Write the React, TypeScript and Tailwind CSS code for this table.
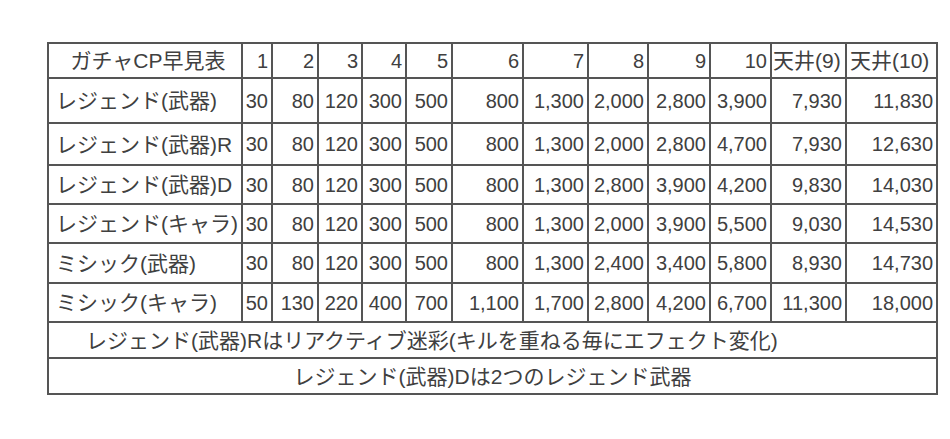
const colWidths = [194, 30, 46, 44, 44, 46, 71, 65, 60, 62, 61, 75, 91];

type Row = {
  name: string;
  values: string[];
  h: string;
};

const rows: Row[] = [
  { name: "レジェンド(武器)", h: "h-[45px]", values: ["30", "80", "120", "300", "500", "800", "1,300", "2,000", "2,800", "3,900", "7,930", "11,830"] },
  { name: "レジェンド(武器)R", h: "h-[42px]", values: ["30", "80", "120", "300", "500", "800", "1,300", "2,000", "2,800", "4,700", "7,930", "12,630"] },
  { name: "レジェンド(武器)D", h: "h-[39px]", values: ["30", "80", "120", "300", "500", "800", "1,300", "2,800", "3,900", "4,200", "9,830", "14,030"] },
  { name: "レジェンド(キャラ)", h: "h-[39px]", values: ["30", "80", "120", "300", "500", "800", "1,300", "2,000", "3,900", "5,500", "9,030", "14,530"] },
  { name: "ミシック(武器)", h: "h-[40px]", values: ["30", "80", "120", "300", "500", "800", "1,300", "2,400", "3,400", "5,800", "8,930", "14,730"] },
  { name: "ミシック(キャラ)", h: "h-[39px]", values: ["50", "130", "220", "400", "700", "1,100", "1,700", "2,800", "4,200", "6,700", "11,300", "18,000"] },
];

const headers = ["1", "2", "3", "4", "5", "6", "7", "8", "9", "10"];

export default function App() {
  const cell = "border-2 border-[#555555] p-0";
  const num = `${cell} text-right pr-[3px] whitespace-nowrap text-[20px]`;

  return (
    <div className="w-[950px] h-[439px] bg-white pl-[47px] pt-[42px]">
      <table
        className="table-fixed border-collapse text-[21px] leading-none text-[#404040] w-[891px]"
        style={{ fontFamily: '"Liberation Sans", "Noto Sans CJK JP", sans-serif' }}
      >
        <colgroup>
          {colWidths.map((w, i) => (
            <col key={i} style={{ width: w }} />
          ))}
        </colgroup>
        <tbody>
          <tr className="h-[35px]">
            <td className={`${cell} text-center pl-[6px] whitespace-nowrap`}>ガチャCP早見表</td>
            {headers.map((h) => (
              <td key={h} className={num}>
                {h}
              </td>
            ))}
            <td className={`${cell} text-left pl-[1px] whitespace-nowrap`}>天井(9)</td>
            <td className={`${cell} text-left pl-[3px] whitespace-nowrap`}>天井(10)</td>
          </tr>
          {rows.map((r) => (
            <tr key={r.name} className={r.h}>
              <td className={`${cell} text-left pl-[7px] whitespace-nowrap`}>{r.name}</td>
              {r.values.map((v, i) => (
                <td key={i} className={num}>
                  {v}
                </td>
              ))}
            </tr>
          ))}
          <tr className="h-[36px]">
            <td colSpan={13} className={`${cell} text-left pl-[37px] whitespace-nowrap`}>
              レジェンド(武器)Rはリアクティブ迷彩(キルを重ねる毎にエフェクト変化)
            </td>
          </tr>
          <tr className="h-[36px]">
            <td colSpan={13} className={`${cell} text-center whitespace-nowrap`}>
              レジェンド(武器)Dは2つのレジェンド武器
            </td>
          </tr>
        </tbody>
      </table>
    </div>
  );
}
